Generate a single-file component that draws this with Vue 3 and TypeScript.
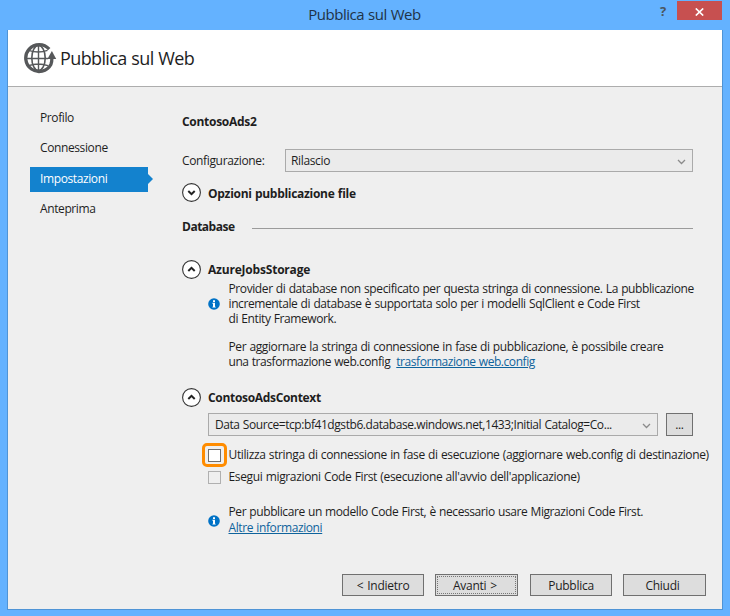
<script setup lang="ts">
interface Step {
  label: string
  active?: boolean
}

const steps: Step[] = [
  { label: 'Profilo' },
  { label: 'Connessione' },
  { label: 'Impostazioni', active: true },
  { label: 'Anteprima' },
]

const actions = [
  { label: '< Indietro', kind: 'back' },
  { label: 'Avanti >', kind: 'next' },
  { label: 'Pubblica', kind: 'publish' },
  { label: 'Chiudi', kind: 'dismiss' },
]
</script>

<template>
  <div class="window">
    <div class="titlebar">
      <span class="title">Pubblica sul Web</span>
      <span class="help">?</span>
      <button class="close">
        <svg width="9" height="8" viewBox="0 0 9 8"><path d="M0.8 0.5L8.2 7.5M8.2 0.5L0.8 7.5" stroke="#fff" stroke-width="1.7" /></svg>
      </button>
    </div>

    <div class="frame">
      <header class="header">
        <svg class="globe" width="33" height="31" viewBox="0 0 33 31" fill="none" stroke="#56585a">
          <path d="M25.2 6.2A13.4 13.4 0 1 0 26.9 21.5Q27.9 19.4 27.9 15" stroke-width="3.3" />
          <ellipse cx="14.5" cy="15" rx="6.7" ry="12.5" stroke-width="1.6" />
          <path d="M14.5 2V28M2 15.5H24M4.5 7.4Q14.5 10.6 23.5 7.4M4.5 22.6Q14.5 19.4 24 22.6" stroke-width="1.4" />
          <path d="M27.9 8L32.2 16H23.4Z" fill="#56585a" stroke="none" />
        </svg>
        <h1>Pubblica sul Web</h1>
      </header>

      <div class="body">
        <nav class="steps">
          <div v-for="s in steps" :key="s.label" class="step" :class="{ active: s.active }">{{ s.label }}</div>
        </nav>

        <main class="content">
          <h2 class="project">ContosoAds2</h2>
          <div class="config">
            <label>Configurazione:</label>
            <div class="combo">
              <span>Rilascio</span>
              <svg width="9" height="6" viewBox="0 0 9 6"><path d="M1 1L4.5 4.5L8 1" /></svg>
            </div>
          </div>

          <div class="expander options">
            <svg class="circle" width="19" height="19" viewBox="0 0 19 19"><circle cx="9.5" cy="9.5" r="8.9" /><path d="M6.3 8L9.5 11.1L12.7 8" /></svg>
            <strong>Opzioni pubblicazione file</strong>
          </div>
          <div class="divider"><strong>Database</strong><i></i></div>

          <div class="expander azure">
            <svg class="circle" width="19" height="19" viewBox="0 0 19 19"><circle cx="9.5" cy="9.5" r="8.9" /><path d="M6.3 11L9.5 7.9L12.7 11" /></svg>
            <strong>AzureJobsStorage</strong>
          </div>
          <div class="note provider">
            <svg class="info" width="12" height="12" viewBox="0 0 12 12"><circle cx="6" cy="6" r="5.8" fill="#0072c6" /><path d="M5 2.2H7V4H5ZM4.4 4.8H7V8.7H7.7V9.6H4.4V8.7H5V5.7H4.4Z" fill="#fff" /></svg>
            <p>
              Provider di database non specificato per questa stringa di connessione. La pubblicazione<br>
              incrementale di database è supportata solo per i modelli SqlClient e Code First<br>
              di Entity Framework.
            </p>
          </div>
          <p class="update">
            Per aggiornare la stringa di connessione in fase di pubblicazione, è possibile creare<br>
            <span class="tight">una trasformazione web.config<a>trasformazione web.config</a></span>
          </p>

          <div class="expander context">
            <svg class="circle" width="19" height="19" viewBox="0 0 19 19"><circle cx="9.5" cy="9.5" r="8.9" /><path d="M6.3 11L9.5 7.9L12.7 11" /></svg>
            <strong>ContosoAdsContext</strong>
          </div>
          <div class="source">
            <div class="combo">
              <span>Data Source=tcp:bf41dgstb6.database.windows.net,1433;Initial Catalog=Co...</span>
              <svg width="9" height="6" viewBox="0 0 9 6"><path d="M1 1L4.5 4.5L8 1" /></svg>
            </div>
            <button class="btn browse">...</button>
          </div>
          <div class="check first">
            <span class="box on"></span>
            <span>Utilizza stringa di connessione in fase di esecuzione (aggiornare web.config di destinazione)</span>
          </div>
          <div class="check second">
            <span class="box"></span>
            <span>Esegui migrazioni Code First (esecuzione all'avvio dell'applicazione)</span>
          </div>
          <div class="note migrations">
            <svg class="info" width="12" height="12" viewBox="0 0 12 12"><circle cx="6" cy="6" r="5.8" fill="#0072c6" /><path d="M5 2.2H7V4H5ZM4.4 4.8H7V8.7H7.7V9.6H4.4V8.7H5V5.7H4.4Z" fill="#fff" /></svg>
            <p>
              <span class="require">Per pubblicare un modello Code First, è necessario usare Migrazioni Code First.</span><br>
              <a>Altre informazioni</a>
            </p>
          </div>
        </main>
      </div>

      <footer class="actions">
        <button v-for="a in actions" :key="a.kind" class="btn" :class="a.kind">{{ a.label }}</button>
      </footer>
    </div>
  </div>
</template>

<style>
body {
  margin: 0;
  overflow: hidden;
}
</style>

<style scoped>
* {
  box-sizing: border-box;
}
.window {
  width: 730px;
  height: 616px;
  padding: 0 7px 6px;
  background: #64b2ff;
  color: #1e1e1e;
  font: 12px/15px "Open Sans", "Noto Sans", sans-serif;
  letter-spacing: -0.39px;
  word-spacing: 0.5px;
  white-space: nowrap;
  display: flex;
  flex-direction: column;
}
h1, h2, p {
  margin: 0;
  font-weight: 400;
}
strong {
  font-weight: 700;
  letter-spacing: -0.29px;
}
button {
  font: inherit;
  color: inherit;
  letter-spacing: inherit;
  word-spacing: inherit;
  padding: 0;
}
.titlebar {
  height: 30px;
  display: grid;
  grid-template-columns: 653px 17px 45px 1fr;
  align-items: start;
}
.title {
  padding-left: 62px;
  text-align: center;
  font-size: 15px;
  line-height: 29px;
  letter-spacing: -0.47px;
  color: #1f3247;
}
.help {
  font-size: 13px;
  font-weight: 700;
  line-height: 23px;
  color: #4b5660;
}
.close {
  width: 45px;
  height: 19px;
  margin-top: 1px;
  border: 0;
  background: #c75050;
  display: flex;
  align-items: center;
  justify-content: center;
  padding-top: 2px;
}
.frame {
  flex: 1;
  background: #efefef;
  border: 1px solid #4f94d6;
  border-top: 0;
  display: flex;
  flex-direction: column;
}
.header {
  height: 57px;
  background: #fff;
  border-bottom: 1px solid #adadad;
  display: flex;
  align-items: flex-start;
  padding: 13px 0 0 16px;
}
h1 {
  margin-left: 3px;
  font-size: 18px;
  line-height: 31px;
  letter-spacing: -0.62px;
  word-spacing: 0.6px;
}
.body {
  display: grid;
  grid-template-columns: 152px 1fr;
  padding-left: 22px;
  height: 462px;
}
.steps {
  padding-top: 19px;
}
.step {
  width: 118px;
  height: 25px;
  margin-bottom: 5.3px;
  padding-left: 10px;
  line-height: 24px;
}
.step.active {
  position: relative;
  background: #1382ce;
  color: #fff;
}
.step.active::after {
  content: "";
  position: absolute;
  left: 100%;
  top: 7px;
  border: solid transparent;
  border-width: 5.5px 0 5.5px 5px;
  border-left-color: #1382ce;
}
.content {
  display: flex;
  flex-direction: column;
}
.project {
  font-size: 12px;
  font-weight: 700;
  line-height: 20px;
  letter-spacing: -0.29px;
  margin-top: 25px;
}
.config {
  display: grid;
  grid-template-columns: 103px 408px;
  align-items: center;
  margin-top: 17px;
}
.config label {
  letter-spacing: -0.35px;
}
.combo {
  height: 23px;
  border: 1px solid #aaa;
  background: #ebebeb;
  display: flex;
  align-items: center;
  justify-content: space-between;
  padding: 0 6px 0 5px;
}
.config .combo {
  letter-spacing: -0.35px;
}
.combo svg {
  fill: none;
  stroke: #8b8b8b;
  stroke-width: 1.3;
  margin-top: 2px;
}
.expander {
  height: 19px;
  display: flex;
  align-items: center;
  gap: 7px;
}
.options strong {
  padding-top: 2px;
}
.azure strong {
  letter-spacing: -0.2px;
}
.circle circle {
  fill: #fff;
  stroke: #333;
  stroke-width: 1.1;
}
.circle path {
  fill: none;
  stroke: #222;
  stroke-width: 2;
}
.options {
  margin-top: 11px;
}
.divider {
  height: 15px;
  display: grid;
  grid-template-columns: 70px 441px;
  align-items: center;
  margin-top: 17px;
}
.divider strong {
  letter-spacing: -0.5px;
}
.divider i {
  height: 1px;
  background: #9b9b9b;
  margin-top: 4px;
}
.azure {
  margin-top: 26px;
}
.note {
  display: flex;
  align-items: center;
  padding-left: 26px;
  gap: 8.5px;
}
.provider {
  margin-top: 2px;
  letter-spacing: -0.4px;
}
.provider .info {
  margin-top: 1px;
}
.update {
  padding-left: 46.5px;
  margin-top: 13px;
}
.tight {
  letter-spacing: -0.44px;
}
.update a {
  margin-left: 6px;
}
a {
  color: #0e639c;
  text-decoration: underline;
  text-underline-offset: 1px;
  text-decoration-thickness: 1px;
}
.context {
  margin-top: 19px;
}
.context strong {
  letter-spacing: -0.32px;
}
.source {
  display: grid;
  grid-template-columns: 450px 27px;
  gap: 8px;
  padding-left: 26px;
  margin-top: 6px;
}
.source .combo {
  padding-left: 6px;
  letter-spacing: -0.43px;
}
.btn {
  border: 1px solid #707070;
  border-radius: 0;
  background: #ddd;
}
.check {
  display: flex;
  align-items: center;
  height: 15px;
  padding-left: 26px;
  gap: 7.5px;
}
.first {
  margin-top: 11px;
  letter-spacing: -0.37px;
}
.first .box {
  margin-top: 1px;
}
.second {
  margin-top: 7px;
  letter-spacing: -0.35px;
}
.second .box {
  margin-top: 1px;
}
.box {
  width: 13px;
  height: 13px;
  border: 1px solid #b0b0b0;
}
.box.on {
  position: relative;
  background: #fff;
  border-color: #707070;
}
.box.on::after {
  content: "";
  position: absolute;
  inset: -7px -7px -6px;
  border: 3px solid #ff8c00;
  border-radius: 5px;
}
.migrations {
  margin-top: 20px;
  line-height: 16px;
}
.migrations .info {
  margin-top: 1px;
}
.require {
  letter-spacing: -0.41px;
}
.actions {
  display: flex;
  padding: 25px 0 0 334px;
  letter-spacing: -0.27px;
  word-spacing: 1.2px;
}
.actions .btn {
  width: 82px;
  height: 22px;
  margin-right: 11px;
}
.actions .next {
  width: 83px;
  margin-right: 12px;
  padding-right: 3px;
  outline: 1px dotted #777;
  outline-offset: -3px;
}
.actions .dismiss {
  width: 83px;
  padding-right: 4px;
  margin-right: 0;
}
</style>
